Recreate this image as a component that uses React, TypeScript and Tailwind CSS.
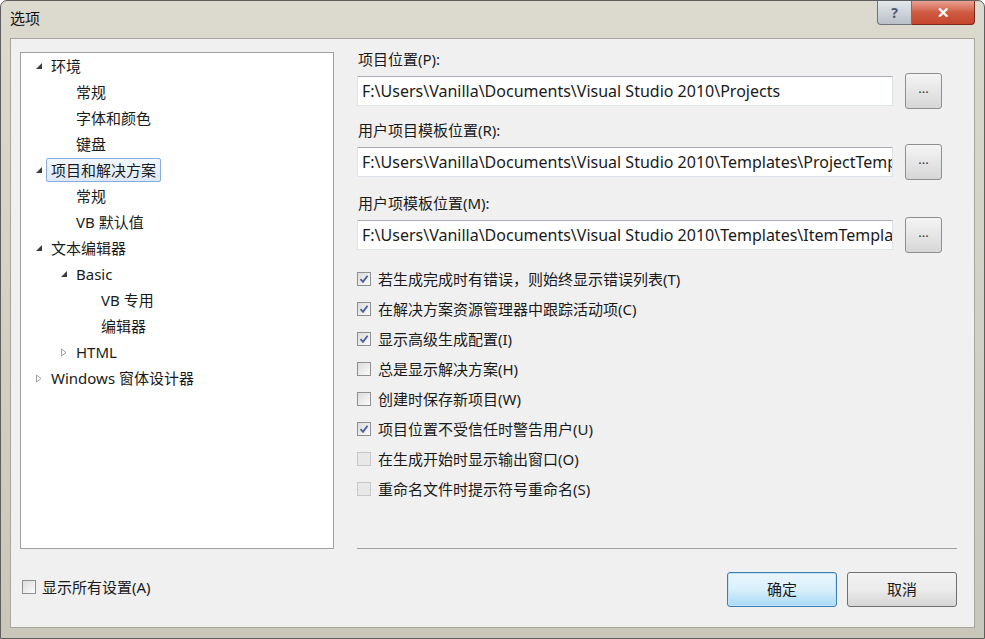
import { useState } from "react";

type Node = { label: string; level: number; arrow?: "open" | "closed"; selected?: boolean };

const tree: Node[] = [
  { label: "环境", level: 0, arrow: "open" },
  { label: "常规", level: 1 },
  { label: "字体和颜色", level: 1 },
  { label: "键盘", level: 1 },
  { label: "项目和解决方案", level: 0, arrow: "open", selected: true },
  { label: "常规", level: 1 },
  { label: "VB 默认值", level: 1 },
  { label: "文本编辑器", level: 0, arrow: "open" },
  { label: "Basic", level: 1, arrow: "open" },
  { label: "VB 专用", level: 2 },
  { label: "编辑器", level: 2 },
  { label: "HTML", level: 1, arrow: "closed" },
  { label: "Windows 窗体设计器", level: 0, arrow: "closed" },
];

const paths = [
  ["项目位置(P):", "F:\\Users\\Vanilla\\Documents\\Visual Studio 2010\\Projects"],
  ["用户项目模板位置(R):", "F:\\Users\\Vanilla\\Documents\\Visual Studio 2010\\Templates\\ProjectTemplates"],
  ["用户项模板位置(M):", "F:\\Users\\Vanilla\\Documents\\Visual Studio 2010\\Templates\\ItemTemplates"],
];

const options: [string, boolean, boolean?][] = [
  ["若生成完成时有错误，则始终显示错误列表(T)", true],
  ["在解决方案资源管理器中跟踪活动项(C)", true],
  ["显示高级生成配置(I)", true],
  ["总是显示解决方案(H)", false],
  ["创建时保存新项目(W)", false],
  ["项目位置不受信任时警告用户(U)", true],
  ["在生成开始时显示输出窗口(O)", false, true],
  ["重命名文件时提示符号重命名(S)", false, true],
];

function Arrow({ kind }: { kind: "open" | "closed" }) {
  return kind === "open" ? (
    <svg width="8" height="8" viewBox="0 0 8 8">
      <path d="M7 1 L7 7 L1 7 Z" fill="#3c3c3c" />
    </svg>
  ) : (
    <svg width="8" height="9" viewBox="0 0 8 9">
      <path d="M1.5 1 L6 4.5 L1.5 8 Z" fill="none" stroke="#a0a0a0" />
    </svg>
  );
}

function Check({ checked, dim }: { checked: boolean; dim?: boolean }) {
  return (
    <span
      className={`flex h-[14px] w-[14px] shrink-0 items-center justify-center border ${
        dim ? "border-[#c8c8c8] bg-[#e8e8e8]" : "border-[#8e8f8f] bg-gradient-to-br from-[#dcdcdc] to-[#fbfbfb]"
      }`}
    >
      {checked ? (
        <svg width="10" height="10" viewBox="0 0 10 10">
          <path d="M1.5 5.2 L4 7.8 L8.6 1.8" fill="none" stroke="#4a5f97" strokeWidth="1.8" />
        </svg>
      ) : null}
    </span>
  );
}

export default function App() {
  const [opts, setOpts] = useState(options.map((o) => o[1]));
  const [all, setAll] = useState(false);

  return (
    <div
      className="flex h-[639px] w-[985px] flex-col overflow-hidden rounded-t-[7px] border border-[#5e5e5e] bg-gradient-to-b from-[#dcd9ce] via-[#d3d0c4] to-[#c9c6ba] text-[15px] text-[#1a1a1a]"
      style={{ fontFamily: '"Noto Sans", "Noto Sans CJK SC", sans-serif' }}
    >
      <div className="flex h-[37px] shrink-0 items-start">
        <span className="ml-[9px] mt-[6px] text-[15px] text-[#111]">选项</span>
        <div className="ml-auto mr-[9px] flex">
          <button className="flex h-[24px] w-[35px] items-center justify-center rounded-bl-[4px] border border-t-0 border-[#6f7479] bg-gradient-to-b from-[#e4e8ec] to-[#b9c0c8] text-[14px] font-bold text-[#4c5a6c]">
            ?
          </button>
          <button className="flex h-[24px] w-[63px] items-center justify-center rounded-br-[4px] border border-l-0 border-t-0 border-[#7d2a1d] bg-gradient-to-b from-[#e8a293] via-[#cf5a42] to-[#c6442c] text-[15px] font-bold text-white">
            ✕
          </button>
        </div>
      </div>

      <div className="mx-[9px] mb-[10px] flex flex-1 border border-[#a7a59d] bg-[#f0f0f0]">
        <div className="flex w-[323px] shrink-0 flex-col pl-[9px] pt-[13px]">
          <div className="h-[497px] border border-[#a0a0a0] bg-white">
            {tree.map((n, i) => (
              <div key={i} className="flex h-[26px] items-center" style={{ paddingLeft: 14 + n.level * 25 }}>
                <span className="flex w-[16px] shrink-0 items-center">{n.arrow ? <Arrow kind={n.arrow} /> : null}</span>
                <span
                  className={
                    n.selected
                      ? "-ml-[5px] rounded-[2px] border border-[#84acdd] bg-gradient-to-b from-[#f2f7fd] to-[#dde9f8] px-[4px] leading-[22px]"
                      : "leading-[22px]"
                  }
                >
                  {n.label}
                </span>
              </div>
            ))}
          </div>
          <label className="mt-[27px] flex items-center gap-[6px] pl-[2px]" onClick={() => setAll(!all)}>
            <Check checked={all} />
            <span>显示所有设置(A)</span>
          </label>
        </div>

        <div className="flex min-w-0 flex-1 flex-col pl-[23px] pr-[17px] pt-[11px]">
          {paths.map(([label, value], i) => (
            <div key={label} className={i === 0 ? "" : i === 1 ? "mt-[12px]" : "mt-[14px]"}>
              <div className="pl-[1px] leading-[18px]">{label}</div>
              <div className="mt-[5px] flex h-[36px] items-center gap-[12px] pr-[15px]">
                <input
                  readOnly
                  defaultValue={value}
                  className="h-[30px] min-w-0 flex-1 border border-[#dde3e9] border-t-[#a9acb2] bg-white pl-[4px] text-[16px] text-[#1a1a1a] outline-none"
                />
                <button className="flex h-[36px] w-[37px] shrink-0 items-center justify-center rounded-[3px] border border-[#8f8f8f] bg-gradient-to-b from-[#f4f4f4] via-[#e6e6e6] to-[#d6d6d6] pb-[6px] text-[13px] leading-none text-[#333]">
                  ...
                </button>
              </div>
            </div>
          ))}

          <div className="mt-[11px] flex flex-col">
            {options.map(([label, , dim], i) => (
              <label
                key={label}
                className="flex h-[30px] items-center gap-[7px]"
                onClick={() => setOpts(opts.map((v, j) => (j === i ? !v : v)))}
              >
                <Check checked={opts[i]} dim={dim} />
                <span>{label}</span>
              </label>
            ))}
          </div>

          <div className="mt-auto h-px bg-[#a0a0a0]" />
          <div className="mb-[20px] mt-[23px] flex justify-end gap-[10px]">
            <button className="h-[35px] w-[110px] rounded-[3px] border border-[#3c7fb1] bg-gradient-to-b from-[#eaf6fd] via-[#d9f0fc] to-[#a7d9f5] shadow-[inset_0_0_0_1px_#bfe3f7]">
              确定
            </button>
            <button className="h-[35px] w-[110px] rounded-[3px] border border-[#707070] bg-gradient-to-b from-[#f2f2f2] via-[#ebebeb] to-[#d6d6d6]">
              取消
            </button>
          </div>
        </div>
      </div>
    </div>
  );
}
